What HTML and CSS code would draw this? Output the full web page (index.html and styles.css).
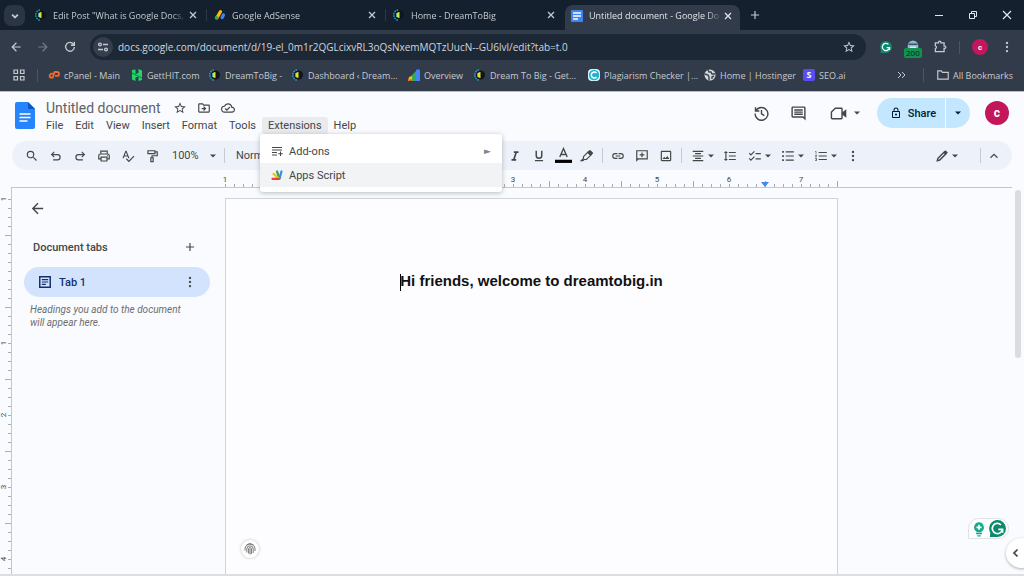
FILE: index.html
```html
<!DOCTYPE html>
<html lang="en">
<head>
<meta charset="utf-8">
<meta name="viewport" content="width=device-width, initial-scale=1">
<title>Untitled document - Google Docs</title>
<link rel="stylesheet" href="styles.css">
</head>
<body>
<svg class="sprite" aria-hidden="true">
  <symbol id="dream" viewBox="0 0 12 12"><circle cx="6.500" cy="6" r="4.500" fill="#10161c"/><path d="M5 .8A5.300 5.300 0 0 0 5 11.200" fill="none" stroke="#2b9fd0" stroke-width="1.300" stroke-dasharray="1.600 .9"/><path d="M6.500 3a3 3 0 0 0 0 6z" fill="#e2e02c"/><path d="M3.500 4v4" stroke="#2db4a0"/></symbol>
  <symbol id="close" viewBox="0 0 12 12"><path d="M3 3l6 6M9 3l-6 6" stroke="currentColor" stroke-width="1.300"/></symbol>
  <symbol id="docs" viewBox="0 0 12 12"><rect width="12" height="12" rx="1" fill="#3f83f4"/><path d="M2 3h8M2 6h8M2 9h5" stroke="#fff" stroke-width="1.500"/></symbol>
  <symbol id="adsense" viewBox="0 0 14 12"><path d="M7.500 2.200L3.500 9" stroke="#fbbc04" stroke-width="3.800" stroke-linecap="round"/><circle cx="3" cy="9.300" r="2.200" fill="#34a853"/><path d="M11 6L9.500 9" stroke="#4285f4" stroke-width="3.800" stroke-linecap="round"/></symbol>
  <symbol id="plus" viewBox="0 0 24 24"><path d="M12 5v14M5 12h14" stroke="currentColor" stroke-width="2"/></symbol>
  <symbol id="back" viewBox="0 0 24 24"><path d="M20 11H7.830l5.590-5.590L12 4l-8 8 8 8 1.410-1.410L7.830 13H20z"/></symbol>
  <symbol id="forward" viewBox="0 0 24 24"><path d="M12 4l-1.410 1.410L16.170 11H4v2h12.170l-5.580 5.590L12 20l8-8z"/></symbol>
  <symbol id="reload" viewBox="0 0 24 24"><path d="M18.500 8A7.500 7.500 0 1 0 19.500 12M19.500 3v6h-6" fill="none" stroke="currentColor" stroke-width="2.200"/></symbol>
  <symbol id="tune" viewBox="0 0 12 12"><g fill="none" stroke="currentColor" stroke-width="1.300"><circle cx="3" cy="3.500" r="1.400"/><path d="M6 3.500h5M1 8.500h5"/><circle cx="9" cy="8.500" r="1.400"/></g></symbol>
  <symbol id="star" viewBox="0 0 24 24"><path d="M22 9.240l-7.190-.62L12 2 9.190 8.630 2 9.240l5.460 4.730L5.820 21 12 17.270 18.180 21l-1.630-7.030L22 9.240zM12 15.400l-3.760 2.270 1-4.280-3.320-2.880 4.380-.38L12 6.100l1.710 4.040 4.380.38-3.320 2.880 1 4.280L12 15.400z"/></symbol>
  <symbol id="dots" viewBox="0 0 24 24"><circle cx="12" cy="5" r="2"/><circle cx="12" cy="12" r="2"/><circle cx="12" cy="19" r="2"/></symbol>
  <symbol id="caret" viewBox="0 0 8 8"><path d="M1 2.500h6L4 5.500z"/></symbol>
  <symbol id="grammar" viewBox="0 0 20 20"><path d="M10 0a10 10 0 0 1 0 20H1l.5-5A10 10 0 0 1 10 0z" fill="#0c8a6b"/><path d="M14 5.600A6 6 0 1 0 15.800 11H11M16 11v4" fill="none" stroke="#fff" stroke-width="2"/></symbol>
  <symbol id="robot" viewBox="0 0 16 12"><path d="M1 12V7a7 7 0 0 1 14 0v5z" fill="#8fb7c9"/><path d="M2 5h12" stroke="#35586c" stroke-width="2"/><path d="M4 9h8" stroke="#dfe8ec" stroke-width="2"/></symbol>
  <symbol id="puzzle" viewBox="0 0 24 24"><path d="M4 5h5.500V4a2 2 0 0 1 4 0v1H19v5.500h1a2 2 0 0 1 0 4h-1V20H4v-5a2.600 2.600 0 0 0 0-5z" fill="none" stroke="currentColor" stroke-width="2.200"/></symbol>
  <symbol id="grid" viewBox="0 0 12 12"><g fill="none" stroke="currentColor" stroke-width="1.200"><path d="M1 1h3.500v3.500H1zM7.500 1H11v3.500H7.500zM1 7.500h3.500V11H1zM7.500 7.500H11V11H7.500z"/></g></symbol>
  <symbol id="cpanel" viewBox="0 0 14 12"><g fill="none" stroke="#f0692e" stroke-width="2.100"><path d="M6.500 4.500H4.200a2.300 2.300 0 0 0 0 4.600H5.500L7.800 2.500H10.500a2.300 2.300 0 0 1 0 4.600H8.200"/></g></symbol>
  <symbol id="getthit" viewBox="0 0 12 12"><path d="M1 1l3.500-.5V5l3-1V0L11 1.500V11l-3.500 1V7.500l-3 1V12L1 10.500z" fill="#23d36b"/><path d="M1 4l10 5" stroke="#117a42"/></symbol>
  <symbol id="ads" viewBox="0 0 12 12"><path d="M8 1q4-2 4 1v10H8z" fill="#4285f4"/><path d="M3 7l5-5v10H3z" fill="#34a853"/><path d="M0 12l1-4 3-1v5z" fill="#fbbc04"/><path d="M0 12l3-2 1 2z" fill="#ea4335"/></symbol>
  <symbol id="plag" viewBox="0 0 12 12"><rect width="12" height="12" rx="4" fill="#dff8fb"/><circle cx="6" cy="6" r="5.200" fill="#1bb3cf"/><path d="M8.500 4A3 3 0 1 0 8.500 8" fill="none" stroke="#fff" stroke-width="1.500"/></symbol>
  <symbol id="globe" viewBox="0 0 12 12"><circle cx="6" cy="6" r="5.500" fill="#d4d7db"/><path d="M1 5l3 1 1 2v3M4 1l1 2h2l1 2h3M8 10V8l2-1" fill="none" stroke="#39424f" stroke-width="1.400"/></symbol>
  <symbol id="folder" viewBox="0 0 24 24"><path d="M3 5h6l2 2.500h10V19H3z" fill="none" stroke="currentColor" stroke-width="2"/></symbol>
  <symbol id="doclogo" viewBox="0 0 20 27"><path d="M2 0h11l7 7v18a2 2 0 0 1-2 2H2a2 2 0 0 1-2-2V2a2 2 0 0 1 2-2z" fill="#2684fc"/><path d="M13 0l7 7h-7z" fill="#0b57c4"/><path d="M4.500 12h11M4.500 15.500h11M4.500 19h8" stroke="#fff" stroke-width="1.500"/></symbol>
  <symbol id="move" viewBox="0 0 24 24"><path d="M20 6h-8l-2-2H4c-1.100 0-2 .9-2 2v12c0 1.100.9 2 2 2h16c1.100 0 2-.9 2-2V8c0-1.100-.9-2-2-2zm0 12H4V6h5.170l2 2H20v10zm-8-1l4-4-4-4-1.400 1.400L12.200 12H8v2h4.200l-1.600 1.600z"/></symbol>
  <symbol id="cloud" viewBox="0 0 24 24"><path d="M19.350 10.040A7.490 7.490 0 0 0 12 4C9.110 4 6.600 5.640 5.350 8.040A5.994 5.994 0 0 0 0 14c0 3.310 2.690 6 6 6h13c2.760 0 5-2.240 5-5 0-2.640-2.050-4.780-4.650-4.960zM19 18H6c-2.210 0-4-1.790-4-4 0-2.050 1.530-3.760 3.560-3.970l1.070-.11.5-.95A5.469 5.469 0 0 1 12 6c2.620 0 4.880 1.860 5.390 4.430l.3 1.500 1.530.11A2.980 2.980 0 0 1 22 15c0 1.650-1.350 3-3 3zm-9-3.820l-2.090-2.090L6.500 13.500 10 17l6.010-6.010-1.410-1.410z"/></symbol>
  <symbol id="history" viewBox="0 0 24 24"><path d="M4.500 7.500A9 9 0 1 1 3 12M3.500 3v5.500H9M12 7v5.500l4 2.500" fill="none" stroke="currentColor" stroke-width="2"/></symbol>
  <symbol id="comment" viewBox="0 0 24 24"><path d="M22 4c0-1.100-.9-2-2-2H4c-1.100 0-2 .9-2 2v12c0 1.100.9 2 2 2h14l4 4V4zm-2 13.170L18.830 16H4V4h16v13.170zM6 12h12v2H6zm0-3h12v2H6zm0-3h12v2H6z"/></symbol>
  <symbol id="video" viewBox="0 0 24 24"><path d="M7.500 4.500H16q1 0 1 1v13q0 1-1 1H3q-1 0-1-1V10z" fill="none" stroke="currentColor" stroke-width="2"/><path d="M17 10.500l6-4.500v12l-6-4.500z"/></symbol>
  <symbol id="lock" viewBox="0 0 24 24"><path d="M18 8h-1V6A5 5 0 0 0 7 6v2H6c-1.100 0-2 .9-2 2v10c0 1.100.9 2 2 2h12c1.100 0 2-.9 2-2V10c0-1.100-.9-2-2-2zM9 6a3 3 0 0 1 6 0v2H9V6zm9 14H6V10h12v10zm-6-3a2 2 0 1 0 0-4 2 2 0 0 0 0 4z"/></symbol>
  <symbol id="search" viewBox="0 0 24 24"><path d="M15.500 14h-.79l-.28-.27A6.471 6.471 0 0 0 16 9.500 6.500 6.500 0 1 0 9.500 16c1.610 0 3.090-.59 4.230-1.570l.27.28v.79l5 4.990L20.490 19l-4.990-5zm-6 0a4.500 4.500 0 1 1 0-9 4.500 4.500 0 0 1 0 9z"/></symbol>
  <symbol id="undo" viewBox="0 0 24 24"><path d="M9 5L4.500 9.500 9 14M5 9.500h9.500a4.500 4.500 0 0 1 0 9H7" fill="none" stroke="currentColor" stroke-width="2"/></symbol>
  <symbol id="redo" viewBox="0 0 24 24"><path d="M15 5l4.500 4.500L15 14M19 9.500H9.500a4.500 4.500 0 0 0 0 9H17" fill="none" stroke="currentColor" stroke-width="2"/></symbol>
  <symbol id="print" viewBox="0 0 24 24"><path d="M6.500 8V3.500h11V8M6.500 17H3v-5.500Q3 8.500 6 8.500h12q3 0 3 3V17h-3.500M7 14h10v6.500H7z" fill="none" stroke="currentColor" stroke-width="2"/><circle cx="18" cy="11.500" r="1"/></symbol>
  <symbol id="spell" viewBox="0 0 24 24"><path d="M12.450 16h2.090L9.430 3H7.570L2.460 16h2.090l1.120-3h5.640l1.140 3zm-6.020-5L8.500 5.480 10.570 11H6.430zm15.160.59l-8.090 8.090L9.830 16l-1.410 1.410 5.090 5.090L23 13l-1.410-1.410z"/></symbol>
  <symbol id="paint" viewBox="0 0 24 24"><path d="M5 3h12v5H5zM17 5h4v6.500h-9V15M10 15h4v6.500h-4z" fill="none" stroke="currentColor" stroke-width="2"/></symbol>
  <symbol id="italic" viewBox="0 0 24 24"><path d="M10 4v3h2.210l-3.420 10H6v3h8v-3h-2.210l3.420-10H18V4z"/></symbol>
  <symbol id="underline" viewBox="0 0 24 24"><path d="M12 17a6 6 0 0 0 6-6V3h-2.500v8a3.500 3.500 0 0 1-7 0V3H6v8a6 6 0 0 0 6 6zm-7 2v2h14v-2z"/></symbol>
  <symbol id="color" viewBox="0 0 16 16"><path d="M4.500 9.500L8 1.500l3.500 8M5.700 7h4.600" fill="none" stroke="currentColor" stroke-width="1.300"/><path d="M0 12h16v3H0z" fill="#000"/></symbol>
  <symbol id="marker" viewBox="0 0 24 24"><path d="M6 13l8-8 5 5-8 8H7l-2 2H2l4-4z" fill="none" stroke="currentColor" stroke-width="2"/><path d="M12 6l4-4q1-1 2 0l4 4q1 1 0 2l-4 4z"/></symbol>
  <symbol id="link" viewBox="0 0 24 24"><path d="M3.900 12A3.100 3.100 0 0 1 7 8.900h4V7H7a5 5 0 0 0 0 10h4v-1.900H7A3.100 3.100 0 0 1 3.900 12zM8 13h8v-2H8v2zm9-6h-4v1.900h4a3.100 3.100 0 0 1 0 6.200h-4V17h4a5 5 0 0 0 0-10z"/></symbol>
  <symbol id="addcomment" viewBox="0 0 24 24"><path d="M2 22l4-4h16V2H2zM4 4h16v12H4zM11 6h2v3h3v2h-3v3h-2v-3H8V9h3z" fill-rule="evenodd"/></symbol>
  <symbol id="image" viewBox="0 0 24 24"><path d="M19 5v14H5V5h14m0-2H5c-1.100 0-2 .9-2 2v14c0 1.100.9 2 2 2h14c1.100 0 2-.9 2-2V5c0-1.100-.9-2-2-2zm-4.860 8.860l-3 3.870L9 13.140 6 17h12z"/></symbol>
  <symbol id="align" viewBox="0 0 24 24"><path d="M7 15v2h10v-2H7zm-4 6h18v-2H3v2zm0-8h18v-2H3v2zm4-6v2h10V7H7zM3 3v2h18V3H3z"/></symbol>
  <symbol id="spacing" viewBox="0 0 24 24"><path d="M6 7h2.500L5 3.500 1.500 7H4v10H1.500L5 20.500 8.500 17H6V7zm4-2v2h12V5H10zm0 14h12v-2H10v2zm0-6h12v-2H10v2z"/></symbol>
  <symbol id="check" viewBox="0 0 24 24"><path d="M2 7l3 3 6-6M2 16l3 3 6-6M13 8h9M13 17h9" fill="none" stroke="currentColor" stroke-width="2"/></symbol>
  <symbol id="bullets" viewBox="0 0 24 24"><path d="M8 4h14v2H8zm0 7h14v2H8zm0 7h14v2H8zM2 3.500h3v3H2zm0 7h3v3H2zm0 7h3v3H2z"/></symbol>
  <symbol id="numbers" viewBox="0 0 24 24"><path d="M2 17h2v.5H3v1h1v.5H2v1h3v-4H2v1zm1-9h1V4H2v1h1v3zm-1 3h1.800L2 13.100v.9h3v-1H3.200L5 10.900V10H2v1zm6-6v2h14V5H8zm0 14h14v-2H8v2zm0-6h14v-2H8v2z"/></symbol>
  <symbol id="pencil" viewBox="0 0 24 24"><path d="M4 20l1-4L16 5l3 3L8 19z" fill="none" stroke="currentColor" stroke-width="2.500"/><path d="M14 6l4-4 4 4-4 4z"/></symbol>
  <symbol id="up" viewBox="0 0 24 24"><path d="M6 15l6-6 6 6" fill="none" stroke="currentColor" stroke-width="2"/></symbol>
  <symbol id="down" viewBox="0 0 24 24"><path d="M5 8.500l7 7 7-7" fill="none" stroke="currentColor" stroke-width="4"/></symbol>
  <symbol id="left" viewBox="0 0 24 24"><path d="M15 5l-7 7 7 7" fill="none" stroke="currentColor" stroke-width="3.500"/></symbol>
  <symbol id="addons" viewBox="0 0 24 24"><path d="M2 5h20M2 10h20M2 15h10M2 20h10M19 13v9M14.500 17.500h9" stroke="currentColor" stroke-width="2"/></symbol>
  <symbol id="script" viewBox="0 0 24 22"><g fill="none" stroke-width="4.500" stroke-linecap="round"><path d="M21 4l-4 14" stroke="#4285f4"/><path d="M12 4l5 14" stroke="#34a853"/><path d="M5 9l11 9" stroke="#fbbc04"/><path d="M3 18.500h13" stroke="#ea4335"/></g></symbol>
  <symbol id="tabdoc" viewBox="0 0 24 24"><path d="M3 3h18v18H3z" fill="none" stroke="currentColor" stroke-width="2.500"/><path d="M6.500 8h11M6.500 12h11M6.500 16h7" stroke="currentColor" stroke-width="2"/></symbol>
  <symbol id="finger" viewBox="0 0 12 12"><g fill="none" stroke="currentColor" stroke-width="1"><path d="M1 7.500V6a5 5 0 0 1 10 0v2M2.800 9.500V6a3.200 3.200 0 0 1 6.400 0v4M4.600 10.500V6a1.400 1.400 0 0 1 2.800 0v5M6 6v5.500M2.500 2Q6-.8 9.500 2"/></g></symbol>
  <symbol id="bulb" viewBox="0 0 14 18"><path d="M7 1a6 6 0 0 1 3 11v1H4v-1A6 6 0 0 1 7 1z" fill="#12ad8b"/><path d="M7 4v6M4 7h6" stroke="#fff" stroke-width="2"/><path d="M3.500 14.500h7M5 17h4" stroke="#12ad8b" stroke-width="1.500"/></symbol>
</svg>

<header class="browser">
  <div class="tabstrip">
    <button class="tab-search" aria-label="Search tabs"><svg class="i10"><use href="#down"/></svg></button>
    <div class="tabs">
      <div class="tab"><svg class="i12"><use href="#dream"/></svg><span class="tab-title">Edit Post "What is Google Docs,</span><button class="tab-close" aria-label="Close tab"><svg class="i12"><use href="#close"/></svg></button></div>
      <div class="tab divided"><svg class="i12"><use href="#adsense"/></svg><span class="tab-title">Google AdSense</span><button class="tab-close" aria-label="Close tab"><svg class="i12"><use href="#close"/></svg></button></div>
      <div class="tab divided"><svg class="i12"><use href="#dream"/></svg><span class="tab-title">Home - DreamToBig</span><button class="tab-close" aria-label="Close tab"><svg class="i12"><use href="#close"/></svg></button></div>
      <div class="tab active"><svg class="i12"><use href="#docs"/></svg><span class="tab-title">Untitled document - Google Do</span><button class="tab-close" aria-label="Close tab"><svg class="i12"><use href="#close"/></svg></button></div>
      <button class="new-tab" aria-label="New tab"><svg class="i14"><use href="#plus"/></svg></button>
    </div>
    <div class="window-buttons">
      <button aria-label="Minimize"><svg class="i10" viewBox="0 0 10 10"><path d="M1 5.500h8" stroke="currentColor"/></svg></button>
      <button aria-label="Restore"><svg class="i10" viewBox="0 0 10 10"><path d="M1.500 3.500h5v5h-5zM3.500 3V1.500h5v5H7" fill="none" stroke="currentColor"/></svg></button>
      <button aria-label="Close"><svg class="i10" viewBox="0 0 10 10"><path d="M1 1l8 8M9 1L1 9" stroke="currentColor" stroke-width="1.200"/></svg></button>
    </div>
  </div>

  <div class="navbar">
    <div class="nav-buttons">
      <button aria-label="Back"><svg class="i14"><use href="#back"/></svg></button>
      <button aria-label="Forward" disabled><svg class="i14"><use href="#forward"/></svg></button>
      <button aria-label="Reload"><svg class="i14"><use href="#reload"/></svg></button>
    </div>
    <div class="omnibox">
      <button class="site-info" aria-label="Site information"><svg class="i12"><use href="#tune"/></svg></button>
      <input class="url" aria-label="Address" value="docs.google.com/document/d/19-el_0m1r2QGLcixvRL3oQsNxemMQTzUucN--GU6lvl/edit?tab=t.0">
      <button aria-label="Bookmark this page"><svg class="i14"><use href="#star"/></svg></button>
    </div>
    <div class="extensions">
      <button aria-label="Grammarly"><svg class="i12"><use href="#grammar"/></svg></button>
      <button class="seo-extension" aria-label="Status 200"><svg class="i12"><use href="#robot"/></svg><span class="badge">200</span></button>
      <button aria-label="Extensions"><svg class="i14"><use href="#puzzle"/></svg></button>
      <span class="nav-line"></span>
      <button class="avatar small" aria-label="Profile">c</button>
      <button class="browser-menu" aria-label="Browser menu"><svg class="i14"><use href="#dots"/></svg></button>
    </div>
  </div>

  <nav class="bookmarks" aria-label="Bookmarks">
    <button class="apps" aria-label="Apps"><svg class="i12"><use href="#grid"/></svg></button>
    <div class="bookmark-list">
      <a href="#"><svg class="i12"><use href="#cpanel"/></svg><span>cPanel - Main</span></a>
      <a href="#"><svg class="i12"><use href="#getthit"/></svg><span>GettHIT.com</span></a>
      <a href="#"><svg class="i12"><use href="#dream"/></svg><span>DreamToBig -</span></a>
      <a href="#"><svg class="i12"><use href="#dream"/></svg><span>Dashboard ‹ Dream...</span></a>
      <a href="#"><svg class="i12"><use href="#ads"/></svg><span>Overview</span></a>
      <a href="#"><svg class="i12"><use href="#dream"/></svg><span>Dream To Big - Get...</span></a>
      <a href="#"><svg class="i12"><use href="#plag"/></svg><span>Plagiarism Checker |...</span></a>
      <a href="#"><svg class="i12"><use href="#globe"/></svg><span>Home | Hostinger</span></a>
      <a href="#"><b class="seo">S</b><span>SEO.ai</span></a>
    </div>
    <button class="overflow" aria-label="More bookmarks"><svg class="i10" viewBox="0 0 10 10"><path d="M2 2l3 3-3 3M6 2l3 3-3 3" fill="none" stroke="currentColor"/></svg></button>
    <button class="all-bookmarks"><svg class="i14"><use href="#folder"/></svg>All Bookmarks</button>
  </nav>
</header>

<div class="docs">
  <header class="doc-header">
    <a class="logo" href="#" aria-label="Docs home"><svg><use href="#doclogo"/></svg></a>
    <div class="doc-heading">
      <div class="title-row">
        <input class="doc-title" aria-label="Document title" value="Untitled document">
        <button aria-label="Star"><svg class="i14"><use href="#star"/></svg></button>
        <button aria-label="Move"><svg class="i14"><use href="#move"/></svg></button>
        <button aria-label="Saved to Drive"><svg class="i14"><use href="#cloud"/></svg></button>
      </div>
      <nav class="menubar" aria-label="Document menu">
        <button>File</button><button>Edit</button><button>View</button><button>Insert</button><button>Format</button><button>Tools</button>
        <div class="menu-holder">
          <button class="open" aria-expanded="true">Extensions</button>
          <div class="menu" role="menu">
            <button role="menuitem"><svg class="i12"><use href="#addons"/></svg><span>Add-ons</span><i class="submenu">►</i></button>
            <button role="menuitem" class="hovered"><svg class="i12"><use href="#script"/></svg><span>Apps Script</span></button>
          </div>
        </div>
        <button>Help</button>
      </nav>
    </div>
    <div class="doc-actions">
      <button aria-label="Version history"><svg class="i18"><use href="#history"/></svg></button>
      <button aria-label="Comments"><svg class="i18"><use href="#comment"/></svg></button>
      <button class="meet" aria-label="Join a call"><svg class="i18"><use href="#video"/></svg><svg class="i8"><use href="#caret"/></svg></button>
      <div class="share">
        <button class="share-main"><svg class="i12"><use href="#lock"/></svg>Share</button>
        <button class="share-more" aria-label="Share options"><svg class="i8"><use href="#caret"/></svg></button>
      </div>
      <button class="avatar" aria-label="Account">c</button>
    </div>
  </header>

  <div class="toolbar" role="toolbar" aria-label="Formatting">
    <button aria-label="Search menus"><svg class="i14"><use href="#search"/></svg></button>
    <button aria-label="Undo"><svg class="i14"><use href="#undo"/></svg></button>
    <button aria-label="Redo"><svg class="i14"><use href="#redo"/></svg></button>
    <button aria-label="Print"><svg class="i14"><use href="#print"/></svg></button>
    <button aria-label="Spelling"><svg class="i14"><use href="#spell"/></svg></button>
    <button aria-label="Paint format"><svg class="i14"><use href="#paint"/></svg></button>
    <span class="picker zoom"><select aria-label="Zoom"><option>100%</option></select><svg class="i8"><use href="#caret"/></svg></span>
    <span class="line"></span>
    <span class="picker style"><select aria-label="Paragraph style"><option>Normal text</option></select></span>
    <button aria-label="Italic"><svg class="i14"><use href="#italic"/></svg></button>
    <button aria-label="Underline"><svg class="i14"><use href="#underline"/></svg></button>
    <button aria-label="Text colour"><svg class="i18"><use href="#color"/></svg></button>
    <button aria-label="Highlight colour"><svg class="i14"><use href="#marker"/></svg></button>
    <span class="line"></span>
    <button aria-label="Insert link"><svg class="i14"><use href="#link"/></svg></button>
    <button aria-label="Add comment"><svg class="i14"><use href="#addcomment"/></svg></button>
    <button aria-label="Insert image"><svg class="i14"><use href="#image"/></svg></button>
    <span class="line"></span>
    <button class="wide" aria-label="Align"><svg class="i14"><use href="#align"/></svg><svg class="i8"><use href="#caret"/></svg></button>
    <button aria-label="Line spacing"><svg class="i14"><use href="#spacing"/></svg></button>
    <button class="wide" aria-label="Checklist"><svg class="i14"><use href="#check"/></svg><svg class="i8"><use href="#caret"/></svg></button>
    <button class="wide" aria-label="Bulleted list"><svg class="i14"><use href="#bullets"/></svg><svg class="i8"><use href="#caret"/></svg></button>
    <button class="wide" aria-label="Numbered list"><svg class="i14"><use href="#numbers"/></svg><svg class="i8"><use href="#caret"/></svg></button>
    <button aria-label="More"><svg class="i14"><use href="#dots"/></svg></button>
    <button class="wide mode" aria-label="Editing mode"><svg class="i14"><use href="#pencil"/></svg><svg class="i8"><use href="#caret"/></svg></button>
    <span class="line"></span>
    <button class="collapse" aria-label="Hide the menus"><svg class="i14"><use href="#up"/></svg></button>
  </div>

  <div class="ruler" aria-hidden="true">
    <div class="inch"><span>1</span></div><div class="inch"></div><div class="inch"><span>1</span></div><div class="inch"><span>2</span></div><div class="inch"><span>3</span></div><div class="inch"><span>4</span></div><div class="inch"><span>5</span></div><div class="inch"><span>6</span><i class="indent"></i></div><div class="inch last"><span>7</span></div>
  </div>

  <div class="workspace">
    <div class="side-ruler" aria-hidden="true">
      <div class="inch margin"><span>1</span></div><div class="inch"></div><div class="inch"><span>1</span></div><div class="inch"><span>2</span></div><div class="inch"><span>3</span></div><div class="inch"><span>4</span></div>
    </div>
    <aside class="outline">
      <button class="outline-close" aria-label="Close outline"><svg class="i18"><use href="#back"/></svg></button>
      <div class="outline-head"><h2>Document tabs</h2><button aria-label="Add tab"><svg class="i14"><use href="#plus"/></svg></button></div>
      <div class="doc-tab"><a href="#"><svg class="i14"><use href="#tabdoc"/></svg>Tab 1</a><button aria-label="Tab options"><svg class="i14"><use href="#dots"/></svg></button></div>
      <p>Headings you add to the document will appear here.</p>
    </aside>
    <main class="paper">
      <h1>Hi friends, welcome to dreamtobig.in</h1>
      <button class="finger" aria-label="Authorship"><svg class="i12"><use href="#finger"/></svg></button>
    </main>
    <div class="scrollbar"></div>
    <div class="grammarly"><svg class="bulb"><use href="#bulb"/></svg><svg class="i18"><use href="#grammar"/></svg></div>
    <button class="panel-toggle" aria-label="Show side panel"><svg class="i12"><use href="#left"/></svg></button>
  </div>
</div>
</body>
</html>
```
FILE: styles.css
```css
* { box-sizing: border-box; }
body {
  margin: 0;
  height: 100vh;
  display: flex;
  flex-direction: column;
  font-family: Roboto, "Liberation Sans", sans-serif;
  font-size: 11px;
  color: #444746;
  background: #f9fbfe;
  overflow: hidden;
}
button, input, select { font: inherit; color: inherit; background: none; border: 0; padding: 0; margin: 0; }
button { display: flex; align-items: center; justify-content: center; white-space: nowrap; flex: none; }
select { appearance: none; }
a { color: inherit; text-decoration: none; }
svg { fill: currentColor; flex: none; display: block; }
.sprite { position: absolute; width: 0; height: 0; }
.i8 { width: 8px; height: 8px; }
.i10 { width: 10px; height: 10px; }
.i12 { width: 12px; height: 12px; }
.i14 { width: 14px; height: 14px; }
.i18 { width: 17px; height: 17px; }

/* Browser frame */
.browser { flex: none; font-family: "Open Sans", "Noto Sans", sans-serif; font-size: 9px; color: #c6cad0; background: #323b49; border-bottom: 1px solid #b9bdc4; }
.tabstrip { display: flex; height: 30px; background: #14202d; }
.tab-search { width: 21px; height: 21px; margin: 5px 2px 0 4px; border-radius: 7px; background: #2b3543; }
.tabs { display: flex; flex: 1; min-width: 0; }
.tab { position: relative; display: flex; align-items: center; flex: 0 1 179px; min-width: 0; height: 30px; padding: 0 7px 0 8px; gap: 6px; }
.tab-title { flex: 1; min-width: 0; margin-right: -6px; overflow: hidden; white-space: nowrap; -webkit-mask-image: linear-gradient(90deg, #000 88%, transparent); mask-image: linear-gradient(90deg, #000 88%, transparent); }
.divided { box-shadow: inset 1px 0 #2c3846; clip-path: inset(9px 0); }
.active { height: 25px; margin-top: 5px; padding-bottom: 4px; border-radius: 8px 8px 0 0; background: #323b49; color: #e1e4e8; flex-basis: 175px; margin-left: 1px; padding-left: 6px; padding-right: 6px; }
.new-tab { width: 30px; height: 30px; }
.window-buttons { display: flex; }
.window-buttons button { width: 34px; height: 30px; color: #e3e6ea; }

.navbar { display: flex; align-items: center; height: 34px; padding: 0 4px 0 2px; }
.nav-buttons { display: flex; width: 88px; }
.nav-buttons button { width: 27px; height: 26px; }
.nav-buttons button:disabled { color: #737b87; }
.omnibox { display: flex; align-items: center; flex: 1; height: 26px; padding: 0 10px 0 3px; border-radius: 13px; background: #1d2837; }
.site-info { width: 20px; height: 20px; border-radius: 50%; background: #343e4c; }
.url { flex: 1; min-width: 0; margin: 0 5px; font-size: 10px; color: #d2d6dc; }
.extensions { display: flex; align-items: center; padding-left: 6px; }
.extensions button { width: 27px; height: 26px; }
.seo-extension { position: relative; }
.seo-extension svg { margin-bottom: 4px; }
.badge { position: absolute; left: 5px; bottom: 2px; padding: 0 2px; border-radius: 2px; background: #129151; color: #0b1c13; font-size: 8px; line-height: 10px; }
.nav-line { width: 1px; height: 13px; margin: 0 12px 0 6px; background: #4b5563; }
.avatar { width: 24px; height: 24px; border-radius: 50%; background: #c2185b; color: #fff; font: bold 12px Roboto, sans-serif; }
.extensions .avatar.small { width: 16px; height: 16px; font-size: 8px; }
.extensions .browser-menu { margin-left: 5px; }

.bookmarks { display: flex; align-items: center; height: 27px; padding: 0 11px 5px 13px; }
.apps { width: 12px; margin-right: 12px; }
.bookmark-list { display: grid; grid-template-columns: 83px 78px 83px 116px 66px 114px 116px 99px auto; justify-content: start; flex: 1; min-width: 0; padding-left: 11px; box-shadow: inset 1px 0 #4b5563; }
.bookmark-list a { display: flex; align-items: center; gap: 4px; min-width: 0; white-space: nowrap; }
.seo { width: 12px; border-radius: 2px; background: #5a4df0; color: #fff; line-height: 12px; text-align: center; }
.overflow { width: 16px; }
.all-bookmarks { gap: 3px; padding-left: 12px; margin-left: 14px; border-left: 1px solid #4b5563; }

/* Document header */
.docs { display: flex; flex-direction: column; flex: 1; min-height: 0; }
.doc-header { display: flex; flex: none; height: 49px; padding: 6px 15px 0; }
.logo { width: 20px; padding-top: 4px; }
.logo svg { width: 20px; height: 27px; }
.doc-heading { padding-left: 5px; }
.title-row { display: flex; align-items: center; height: 19px; padding-left: 6px; }
.doc-title { width: 122px; font-size: 14px; color: #5f6266; }
.title-row button { width: 24px; height: 18px; }
.menubar { display: flex; height: 17px; }
.menubar button { height: 17px; padding: 0 6px; }
.menu-holder { position: relative; }
.menubar .open { border-radius: 3px; background: #e9ebee; }
.menubar .menu { position: absolute; z-index: 5; top: 17px; left: -2px; width: 242px; padding: 5px 0; border-radius: 3px; background: #fff; box-shadow: 0 1px 5px rgba(60, 64, 67, .35); }
.menubar .menu button { width: 100%; height: 24px; padding: 0 11px; gap: 6px; }
.menubar .menu .hovered { background: #f1f3f4; }
.menu span { flex: 1; text-align: left; }
.submenu { font: normal 9px "DejaVu Sans", sans-serif; color: #80868b; }
.doc-actions { display: flex; align-items: center; margin-left: auto; height: 30px; }
.doc-actions > button { width: 37px; }
.doc-actions .meet { width: 44px; gap: 6px; margin: 0 10px 0 6px; }
.share { display: flex; height: 30px; margin-right: 15px; border-radius: 15px; overflow: hidden; background: #c2e7ff; color: #001d35; font-weight: 500; }
.share-main { width: 68px; gap: 6px; padding-left: 4px; }
.share-more { width: 25px; border-left: 1px solid #f4faff; }
.doc-actions .avatar { width: 24px; }

.toolbar { display: flex; flex: none; align-items: center; height: 29px; margin: 0 12px; padding: 0 8px; border-radius: 15px; background: #edf2fa; }
.toolbar button { width: 24px; height: 24px; }
.toolbar .wide { width: 33px; gap: 2px; padding-left: 2px; }
.toolbar .mode { margin-left: auto; margin-right: 15px; }
.toolbar .collapse { width: 20px; }
.line { width: 1px; height: 15px; margin: 0 3px; background: #c7cbd1; flex: none; }
.picker { display: flex; align-items: center; }
.zoom { width: 57px; padding-left: 8px; gap: 7px; }
.zoom select { width: 30px; }
.style { width: 275px; padding-left: 8px; }

/* Rulers */
.ruler { display: flex; flex: none; height: 18px; margin: 0 12px 0 11px; padding-left: 214px; border-bottom: 1px solid #c4c7ca; }
.ruler .inch {
  position: relative; width: 72px; flex: none; font-size: 8px; line-height: 9px; padding-top: 5px;
  background: repeating-linear-gradient(90deg, #aaadb1 0 1px, transparent 1px 9px) 0 100% / 100% 3px no-repeat,
    linear-gradient(#aaadb1, #aaadb1) 36px 100% / 1px 6px no-repeat;
}
.ruler .last { width: 37px; }
.ruler span { display: block; width: 8px; margin-left: -4px; text-align: center; }
.indent { position: absolute; left: 32px; bottom: 0; border: 4px solid transparent; border-top: 5px solid #4285f4; border-bottom: 0; }
.side-ruler { display: flex; flex-direction: column; width: 12px; padding-top: 11px; border-right: 1px solid #c4c7ca; overflow: hidden; flex: none; }
.side-ruler .inch {
  height: 72px; flex: none; font-size: 8px; line-height: 8px; border-right: 1px solid #85898d; margin-right: -1px;
  background: repeating-linear-gradient(180deg, #aaadb1 0 1px, transparent 1px 9px) 100% 0 / 3px 100% no-repeat,
    linear-gradient(#aaadb1, #aaadb1) 100% 36px / 6px 1px no-repeat;
}
.side-ruler .margin { border-color: transparent; }
.side-ruler span { display: block; width: 8px; height: 8px; margin-top: -4px; text-align: center; transform: rotate(-90deg); }

/* Workspace */
.workspace { position: relative; display: flex; flex: 1; min-height: 0; border-bottom: 2px solid #dcdee1; overflow: hidden; }
.outline { width: 213px; flex: none; padding: 11px 15px 0 12px; }
.outline-close { width: 26px; height: 18px; }
.outline-head { display: flex; align-items: center; justify-content: space-between; height: 20px; margin-top: 20px; padding: 0 13px 0 9px; }
.outline-head h2 { margin: 0; font-size: 11px; font-weight: 500; }
.doc-tab { display: flex; align-items: center; justify-content: space-between; height: 30px; margin-top: 10px; padding: 0 13px 0 14px; border-radius: 15px; background: #d3e3fd; }
.doc-tab a { display: flex; align-items: center; gap: 7px; font-weight: 500; color: #14306b; }
.outline p { margin: 6px 20px 0 6px; font-size: 10px; line-height: 13px; font-style: italic; color: #6a6e72; }
.paper { position: relative; width: 613px; flex: none; margin-top: 10px; padding-top: 71px; border: 1px solid #d0d3d7; border-bottom: 0; background: #fdfdff; }
.paper h1 { margin: 0; font: bold 15px/22px "Liberation Sans", Arial, sans-serif; color: #111; text-align: center; }
.paper h1::before { content: ""; display: inline-block; width: 1px; height: 17px; margin-right: -1px; background: #000; vertical-align: middle; }
.finger { position: absolute; left: 15px; bottom: 16px; width: 18px; height: 18px; border-radius: 50%; background: #fff; box-shadow: 0 0 3px rgba(60, 64, 67, .35); color: #777; }
.scrollbar { width: 6px; height: 168px; margin: 2px 3px 0 auto; border-radius: 3px; background: #dadce0; }
.grammarly { position: absolute; right: 15px; bottom: 35px; display: flex; align-items: center; justify-content: space-between; width: 41px; height: 21px; padding: 0 2px 0 4px; border: 1px solid #dfe2e6; border-radius: 11px 11px 11px 0; background: #fff; }
.bulb { width: 12px; height: 16px; }
.panel-toggle { position: absolute; right: -12px; bottom: 6px; width: 30px; height: 30px; padding-right: 10px; border-radius: 50%; background: #fff; box-shadow: 0 1px 3px rgba(60, 64, 67, .4); }
```
